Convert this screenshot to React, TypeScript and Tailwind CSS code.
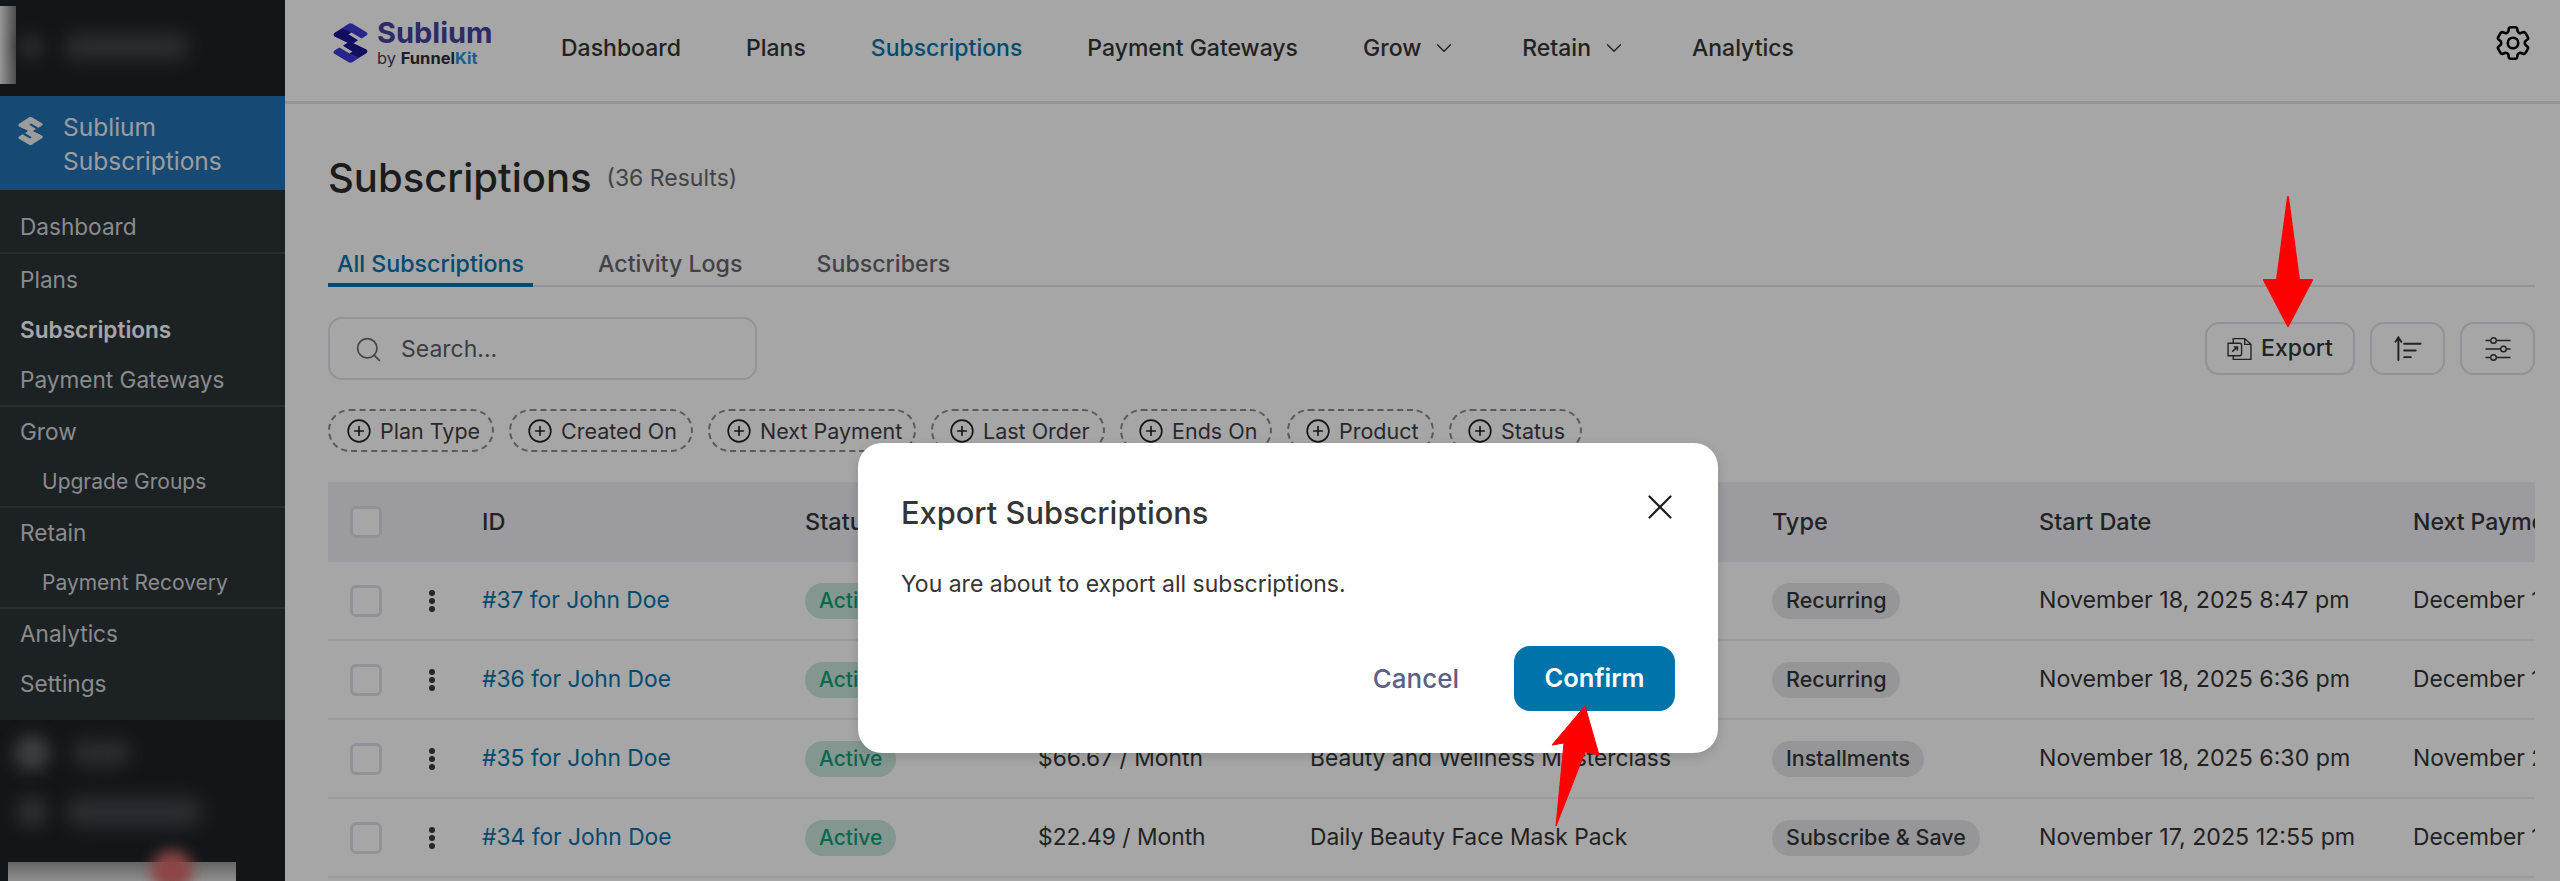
import { ChevronDown, CirclePlus, Search, X } from "lucide-react";
import { HiOutlineCog6Tooth } from "react-icons/hi2";

const FONT = "font-['Inter','Liberation_Sans',sans-serif]";

const TOP_NAV = [
  { label: "Dashboard" },
  { label: "Plans" },
  { label: "Subscriptions", active: true },
  { label: "Payment Gateways" },
  { label: "Grow", caret: true },
  { label: "Retain", caret: true },
  { label: "Analytics" },
];

const SIDE_GROUPS = [
  { className: "pt-3", items: [{ label: "Dashboard" }] },
  { className: "pt-[1px]", items: [{ label: "Plans" }, { label: "Subscriptions", bold: true }, { label: "Payment Gateways" }] },
  { items: [{ label: "Grow" }, { label: "Upgrade Groups", sub: true }] },
  { items: [{ label: "Retain" }, { label: "Payment Recovery", sub: true }] },
];

const FILTERS = [
  { label: "Plan Type", width: "w-[166px]" },
  { label: "Created On", width: "w-[184px]" },
  { label: "Next Payment", width: "w-[208px]" },
  { label: "Last Order", width: "w-[174px]" },
  { label: "Ends On", width: "w-[152px]" },
  { label: "Product", width: "w-[147px]" },
  { label: "Status", width: "w-[133px]" },
];

const ROWS = [
  { id: "#37 for John Doe", price: "$29.99 / Month", product: "Beauty and Wellness Box", type: "Recurring", start: "November 18, 2025 8:47 pm", next: "December 18, 2025" },
  { id: "#36 for John Doe", price: "$29.99 / Month", product: "Beauty and Wellness Box", type: "Recurring", start: "November 18, 2025 6:36 pm", next: "December 18, 2025" },
  { id: "#35 for John Doe", price: "$66.67 / Month", product: "Beauty and Wellness Masterclass", type: "Installments", start: "November 18, 2025 6:30 pm", next: "November 25, 2025" },
  { id: "#34 for John Doe", price: "$22.49 / Month", product: "Daily Beauty Face Mask Pack", type: "Subscribe & Save", start: "November 17, 2025 12:55 pm", next: "December 17, 2025" },
];

const COLS = "grid grid-cols-[154px_323px_233px_272px_462px_267px_374px_400px] items-center";

function Checkbox() {
  return <div className="size-8 rounded-md border-[3px] border-[#dfe1ea] bg-white" />;
}

function LeadCell({ dots }: { dots?: boolean }) {
  return (
    <div className="flex items-center pl-[22px]">
      <Checkbox />
      {dots && (
        <div className="ml-[47px] flex flex-col gap-[2px]">
          <span className="size-[6px] rounded-full bg-[#3a3a3c]" />
          <span className="size-[6px] rounded-full bg-[#3a3a3c]" />
          <span className="size-[6px] rounded-full bg-[#3a3a3c]" />
        </div>
      )}
    </div>
  );
}

const MARK_TOP = "M34 1 Q38 -1 42 1 L72 19 Q78 23 72 27 L62 33 L40 20 L33 24 L54 37 L40 46 L4 29 Q-1 25 4 21 Z";
const MARK_FOLD = "M4 21 L20 12 L40 20 L33 24 L54 37 L40 46 L4 29 Q-1 25 4 21 Z";

function SubliumMark({ className, light, dark }: { className: string; light: string; dark: string }) {
  return (
    <svg viewBox="0 0 76 86" className={className}>
      <path d={MARK_TOP} fill={light} />
      <path d={MARK_FOLD} fill={dark} />
      <g transform="rotate(180 38 43)">
        <path d={MARK_TOP} fill={light} />
        <path d={MARK_FOLD} fill={dark} />
      </g>
    </svg>
  );
}

function Sidebar() {
  return (
    <aside className="flex w-[285px] shrink-0 flex-col bg-[#1d2327]">
      <div className="flex h-[96px] items-start overflow-hidden">
        <div className="mt-[6px] h-[78px] w-4 bg-gradient-to-r from-[#e8e8e8] to-[#777777]" />
        <div className="ml-[2px] mt-[34px] size-[26px] rounded-full bg-[#3b4146] blur-[8px]" />
        <div className="ml-[20px] mt-[34px] h-[26px] w-[125px] rounded-full bg-[#41474c] blur-[9px]" />
      </div>
      <div className="flex h-[94px] items-start bg-[#2271b1] pl-[18px] pt-[14px] text-[24.5px] leading-[34px] text-[#f0f0f1]">
        <SubliumMark className="mr-[20px] mt-[6px] h-[30px] w-[25px]" light="#f0f0f1" dark="#f0f0f1" />
        <span>
          Sublium
          <br />
          Subscriptions
        </span>
      </div>
      <div className="bg-[#2c3338] text-[22.6px] text-[#d5d6d8]">
        {SIDE_GROUPS.map((group, i) => (
          <div key={i} className={`border-b-2 border-[#3e454b] ${group.className ?? ""}`}>
            {group.items.map((item) => (
              <div
                key={item.label}
                className={`flex items-center ${item.sub ? "h-[49px] pl-[42px] text-[21px]" : "h-[50px] pl-5"} ${item.bold ? "font-semibold text-white" : ""}`}
              >
                {item.label}
              </div>
            ))}
          </div>
        ))}
        <div className="pb-[11px]">
          <div className="flex h-[50px] items-center pl-5">Analytics</div>
          <div className="flex h-[50px] items-center pl-5">Settings</div>
        </div>
      </div>
      <div className="flex flex-1 flex-col overflow-hidden pl-[8px] pt-[16px]">
        <div className="flex h-[34px] items-center gap-[22px] pl-[6px]">
          <span className="size-[36px] rounded-full bg-[#5b6166] blur-[8px]" />
          <span className="h-[26px] w-[58px] rounded-full bg-[#41474c] blur-[9px]" />
        </div>
        <div className="mt-[26px] flex h-[34px] items-center gap-[18px] pl-[8px]">
          <span className="size-[32px] rounded-full bg-[#41474c] blur-[8px]" />
          <span className="h-[30px] w-[136px] rounded-full bg-[#41474c] blur-[9px]" />
        </div>
        <div className="relative mt-[34px] h-[30px] w-[228px] bg-gradient-to-b from-[#9a9a9a] to-[#dddddd]">
          <span className="absolute left-[143px] top-[-12px] size-[42px] rounded-full bg-[#d96a6a] blur-[7px]" />
        </div>
      </div>
    </aside>
  );
}

function TopBar() {
  return (
    <header className="flex h-[104px] items-start border-b-[3px] border-[#e4e4e6]">
      <div className="flex w-[276px] shrink-0 items-start pl-[48px] pt-[20px]">
        <SubliumMark className="h-[46px] w-[35px]" light="#3f3ad8" dark="#1c1491" />
        <div className="ml-[9px] mt-[-6px] flex flex-col">
          <span className="text-[29px] font-bold leading-[38px] text-[#44439f]">Sublium</span>
          <span className="mt-[-4px] text-[16.5px] leading-[20px] text-[#3f3f63]">
            by <span className="font-bold text-[#2c2c3e]">Funnel</span>
            <span className="font-bold text-[#2193d8]">Kit</span>
          </span>
        </div>
      </div>
      <nav className="flex items-center gap-[65px] pt-[31px] text-[23px] font-medium text-[#353535]">
        {TOP_NAV.map((item) => (
          <div key={item.label} className={`flex items-center gap-[10px] ${item.active ? "text-[#0073aa]" : ""}`}>
            {item.label}
            {item.caret && <ChevronDown className="size-[26px]" strokeWidth={1.3} />}
          </div>
        ))}
      </nav>
      <div className="ml-auto pr-[26px] pt-[22px]">
        <HiOutlineCog6Tooth className="size-[42px] text-black" />
      </div>
    </header>
  );
}

function Toolbar() {
  return (
    <div className="mt-[30px] flex items-start justify-between">
      <div className="flex h-[63px] w-[429px] items-center gap-[18px] rounded-[14px] border-2 border-[#e2e3ea] pl-[24px] pt-[2px] text-[23px] text-[#5c5c66]">
        <Search className="size-[29px] text-[#6a6a72]" strokeWidth={1.4} />
        Search...
      </div>
      <div className="mt-[5px] flex gap-[15px]">
        <div className="flex h-[53px] w-[150px] items-center justify-center gap-[9px] rounded-[14px] border-2 border-[#dfe0e8] text-[23px] font-medium text-[#353535]">
          <svg viewBox="0 0 24 24" className="size-[25px]" fill="none" stroke="#353535" strokeWidth="1.3">
            <path d="M6 2.5 H17 L23 8 V22.5 H6 Z" />
            <path d="M17 2.5 V8 H23" />
            <path d="M1 7 H12 Q14 7 14 9 V17 Q14 19 12 19 H1 Z" fill="#ffffff" />
            <path d="M5 15 L10 10.5 M6.5 10.5 H10 V14" strokeWidth="1.5" />
          </svg>
          Export
        </div>
        <div className="flex h-[53px] w-[75px] items-center justify-center rounded-[14px] border-2 border-[#dfe0e8]">
          <svg viewBox="0 0 28 26" className="h-[25px] w-[28px]" fill="none" stroke="#353535" strokeWidth="2" strokeLinecap="round">
            <path d="M4 25 V2 M1 6 L4 1.5 L7 6" />
            <path d="M10 8 H27 M10 15 H22 M10 22 H17" />
          </svg>
        </div>
        <div className="flex h-[53px] w-[75px] items-center justify-center rounded-[14px] border-2 border-[#dfe0e8]">
          <svg viewBox="0 0 26 24" className="h-[24px] w-[26px]" fill="none" stroke="#353535" strokeWidth="1.4" strokeLinecap="round">
            <path d="M1 3.5 H5 M12 3.5 H25 M1 12 H15 M22 12 H25 M1 20.5 H5 M12 20.5 H25" />
            <circle cx="8.5" cy="3.5" r="2.8" />
            <circle cx="18.5" cy="12" r="2.8" />
            <circle cx="8.5" cy="20.5" r="2.8" />
          </svg>
        </div>
      </div>
    </div>
  );
}

function SubscriptionsTable() {
  return (
    <div className="mt-[30px] overflow-hidden text-[22.8px] text-[#353535]">
      <div className={`${COLS} h-[80px] bg-[#eeeff6] text-[23.5px] font-medium`}>
        <LeadCell />
        <div>ID</div>
        <div>Status</div>
        <div>Amount</div>
        <div>Product</div>
        <div>Type</div>
        <div>Start Date</div>
        <div className="whitespace-nowrap text-[23px]">Next Payment</div>
      </div>
      {ROWS.map((row) => (
        <div key={row.id} className={`${COLS} h-[79px] border-b-2 border-[#eeeff3]`}>
          <LeadCell dots />
          <div className="text-[#0073aa]">{row.id}</div>
          <div>
            <span className="inline-flex h-[36px] items-center rounded-full bg-[#c9e9de] px-[14px] text-[21px] font-medium text-[#0e9f77]">
              Active
            </span>
          </div>
          <div>{row.price}</div>
          <div>{row.product}</div>
          <div>
            <span className="inline-flex h-[36px] items-center rounded-full bg-[#e6e7ec] px-[14px] text-[21.5px] font-medium">
              {row.type}
            </span>
          </div>
          <div className="whitespace-nowrap text-[23.2px]">{row.start}</div>
          <div className="whitespace-nowrap">{row.next}</div>
        </div>
      ))}
    </div>
  );
}

function ExportModal() {
  return (
    <div className="absolute left-[858px] top-[443px] flex h-[310px] w-[860px] flex-col rounded-[24px] bg-white pl-[43px] pr-[43px] shadow-[0_4px_12px_rgba(0,0,0,0.12)]">
      <div className="flex items-start justify-between pt-[45px]">
        <h2 className="text-[30.8px] font-medium leading-[50px] text-[#353535]">Export Subscriptions</h2>
        <X className="mr-[-6px] mt-[-2px] size-[42px] text-[#1f1f1f]" strokeWidth={1.3} />
      </div>
      <p className="mt-[28px] text-[23px] leading-[36px] text-[#353535]">You are about to export all subscriptions.</p>
      <div className="mt-auto flex items-center justify-end gap-[55px] pb-[42px]">
        <span className="text-[26px] font-medium text-[#5b6185]">Cancel</span>
        <span className="flex h-[65px] w-[161px] items-center justify-center rounded-[16px] bg-[#0073aa] text-[25.5px] font-semibold text-white">
          Confirm
        </span>
      </div>
    </div>
  );
}

export default function App() {
  return (
    <div className={`relative flex h-[881px] w-[2560px] overflow-hidden bg-white ${FONT}`}>
      <Sidebar />
      <main className="min-w-0 flex-1">
        <TopBar />
        <div className="pl-[43px] pr-[25px] pt-[36px]">
          <div className="flex items-center gap-[15px]">
            <h1 className="text-[40px] font-medium leading-[76px] text-[#2c2c2c]">Subscriptions</h1>
            <span className="text-[23px] text-[#66666a]">(36 Results)</span>
          </div>
          <div className="mt-[31px] flex gap-[56px] border-b-2 border-[#e0e1e8] text-[23.2px] font-medium text-[#66666e]">
            <div className="mb-[-2px] h-[40px] border-b-[4px] border-[#0073aa] px-[9px] text-[#0073aa]">All Subscriptions</div>
            <div className="px-[9px]">Activity Logs</div>
            <div className="px-[9px]">Subscribers</div>
          </div>
          <Toolbar />
          <div className="mt-[29px] flex gap-[15px] text-[21.5px] text-[#404046]">
            {FILTERS.map((f) => (
              <div
                key={f.label}
                className={`flex h-[43px] items-center gap-[8px] rounded-full border-2 border-dashed border-[#8d8d92] pl-[16px] pt-[1px] ${f.width}`}
              >
                <CirclePlus className="size-[26px] text-[#1f1f1f]" strokeWidth={1.5} />
                {f.label}
              </div>
            ))}
          </div>
          <SubscriptionsTable />
        </div>
      </main>
      <div className="absolute inset-0 bg-black/35" />
      <ExportModal />
      <svg className="absolute inset-0 h-[881px] w-[2560px]" viewBox="0 0 2560 881">
        <path d="M2288 197 L2299 280 L2312 280 L2288 326 L2264 280 L2277 280 Z" fill="#fe0000" stroke="#fe0000" strokeLinejoin="round" strokeWidth="2" />
        <path d="M1585 706 L1599 755 L1585 752 L1556 826 L1564 743 L1552 745 Z" fill="#fe0000" stroke="#fe0000" strokeLinejoin="round" strokeWidth="1" />
      </svg>
    </div>
  );
}
